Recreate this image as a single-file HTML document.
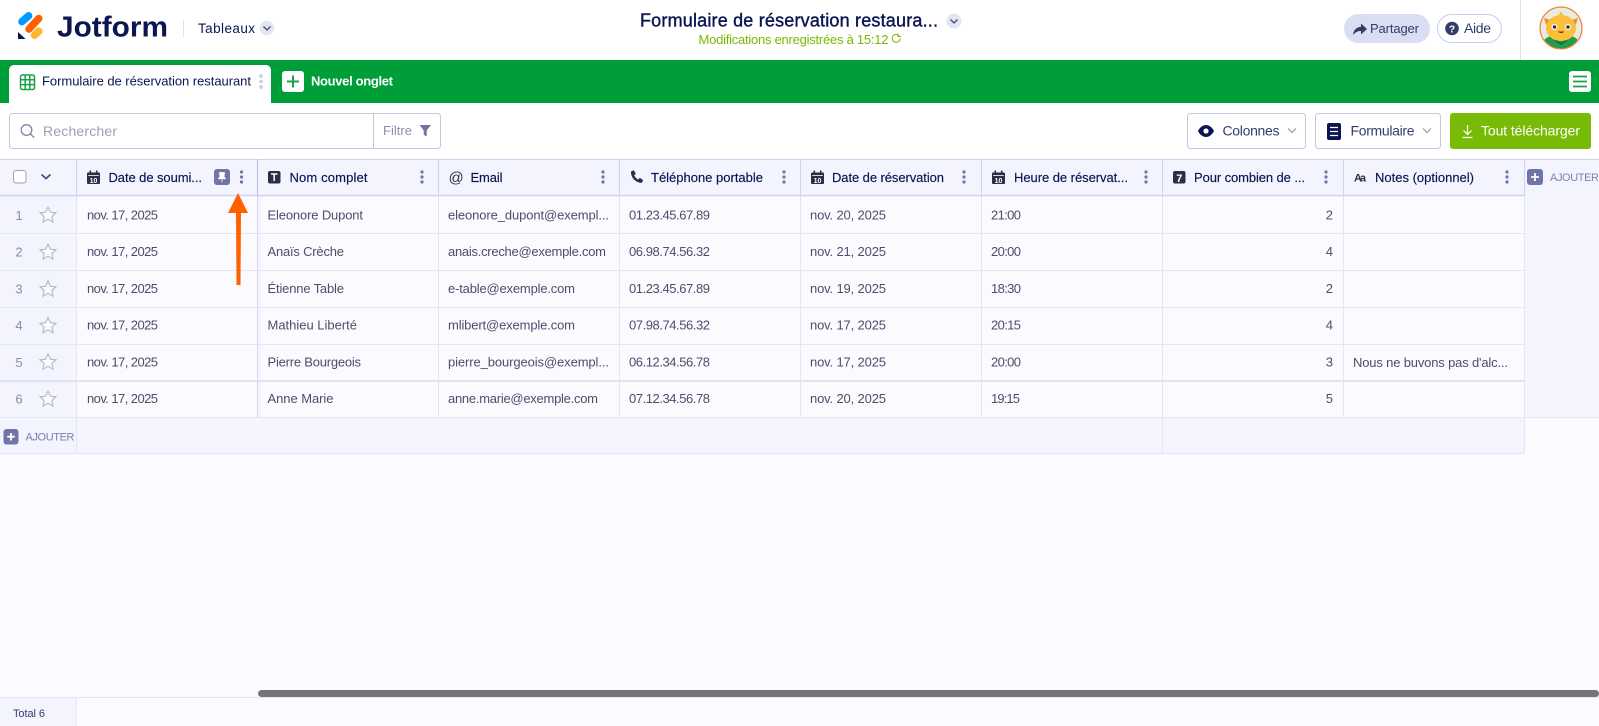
<!DOCTYPE html>
<html lang="fr">
<head>
<meta charset="utf-8">
<title>Formulaire de réservation restaurant - Jotform Tableaux</title>
<style>
html,body{margin:0;padding:0;width:1599px;height:726px;overflow:hidden;background:#fafaff}
svg{display:block}
text{font-family:"Liberation Sans",sans-serif;white-space:pre}
.c{font-size:13px;fill:#4b4f6b}
.h{font-size:13px;fill:#0a1551;stroke:#0a1551;stroke-width:.15}
.l{stroke:#e4e5f5;stroke-width:1}
.hl{stroke:#cdd2f0;stroke-width:1}
.n{font-size:13px;fill:#8a8ea8;text-anchor:middle}
.d{fill:#6f76a7}
.s{fill:#fafaff;stroke:#b4b7c8;stroke-width:1.1}
.i{fill:#2b2f48}
</style>
</head>
<body>
<svg width="1599" height="726" viewBox="0 0 1599 726" xmlns="http://www.w3.org/2000/svg">
<defs>
<g id="cal"><path class="i" d="M1 2.500h11a1 1 0 0 1 1 1V13a1 1 0 0 1-1 1H1a1 1 0 0 1-1-1V3.500a1 1 0 0 1 1-1z"/><rect class="i" x="2.500" y="0.500" width="1.600" height="3.500"/><rect class="i" x="8.900" y="0.500" width="1.600" height="3.500"/><rect x="1.200" y="5" width="10.600" height="0.800" fill="#fff"/><text x="6.500" y="12.800" text-anchor="middle" font-size="7" font-weight="700" fill="#fff">10</text></g>
<g id="dots"><circle cx="0" cy="-5" r="1.600" class="d"/><circle cx="0" cy="0" r="1.600" class="d"/><circle cx="0" cy="5" r="1.600" class="d"/></g>
<path id="star" class="s" d="M0-8 2.300-2.800 8-2.200 3.800 1.600 5 7.200 0 4.300-5 7.200-3.800 1.600-8-2.200-2.300-2.800Z"/>
</defs>

<rect width="1599" height="60" fill="#fff"/>
<rect y="103" width="1599" height="56" fill="#fff"/>

<!-- logo -->
<g stroke-linecap="round" stroke-width="7.500" fill="none">
<path d="M22 21.600 28.600 15.800" stroke="#0099ff"/>
<path d="M29 29 38.700 18.500" stroke="#ff6100"/>
<path d="M34.500 35.200 38.700 31.300" stroke="#ffb629"/>
</g>
<path d="M18 32V38.300a.7.7 0 0 0 .7.7H25.600Z" fill="#0a1551"/>
<text x="57" y="36.500" font-size="29" font-weight="700" fill="#0a1551" textLength="111" lengthAdjust="spacingAndGlyphs">Jotform</text>
<rect x="183" y="20" width="1" height="17" fill="#dfe1ec"/>
<text x="198" y="33" font-size="13.500" fill="#0a1551" textLength="57">Tableaux</text>
<circle cx="267" cy="28" r="7.300" fill="#e3e5f5"/>
<path d="M263.500 26.500 267 30 270.500 26.500" fill="none" stroke="#45496e" stroke-width="1.300"/>

<!-- title -->
<text x="640" y="26.500" font-size="18" fill="#0a1551" stroke="#0a1551" stroke-width=".4" textLength="298">Formulaire de réservation restaura...</text>
<circle cx="954" cy="21" r="7.500" fill="#e3e5f5"/>
<path d="M950.500 19.500 954 23 957.500 19.500" fill="none" stroke="#45496e" stroke-width="1.300"/>
<text x="698.500" y="44" font-size="13" fill="#7ab800" textLength="190">Modifications enregistrées à 15:12</text>
<path d="M899 35.500a4 4 0 1 0 1.200 2.800" fill="none" stroke="#7ab800" stroke-width="1"/>
<path d="M898 33.500v3h3" fill="none" stroke="#7ab800" stroke-width="1"/>

<!-- top right -->
<rect x="1344" y="14" width="86" height="29" rx="14.500" fill="#dadef3"/>
<path d="M1353 35c.5-5 3.500-8 8-8.300V23.500l6 5.500-6 5.500V31c-3.500 0-5.500 1.300-8 4z" fill="#343c6a"/>
<text x="1370" y="33" font-size="13" fill="#343c6a" textLength="49">Partager</text>
<rect x="1437.500" y="14.500" width="64" height="28" rx="14" fill="#fff" stroke="#c8ceed"/>
<circle cx="1452" cy="28.500" r="6.800" fill="#343c6a"/>
<text x="1452" y="32.500" font-size="10.500" font-weight="700" fill="#fff" text-anchor="middle">?</text>
<text x="1464" y="33" font-size="14" fill="#343c6a" textLength="27">Aide</text>
<rect x="1520" y="0" width="1" height="60" fill="#dfe1e8"/>

<!-- avatar -->
<clipPath id="av"><circle cx="1561" cy="28" r="21"/></clipPath>
<circle cx="1561" cy="28" r="21" fill="#e8ebdf"/>
<g clip-path="url(#av)">
<path d="M1542 45c2-8 8-10 19-10s17 2 19 10v5h-38z" fill="#1f9d4d"/>
<path d="M1555 40l6 4 6-4" fill="none" stroke="#0f6a30" stroke-width="1.500"/>
<path d="M1544 18l9 3-5 9zM1578 18l-9 3 5 9z" fill="#f08a2c"/>
<path d="M1561 11l4 7h-8z" fill="#fbbf3a"/>
<ellipse cx="1561" cy="28" rx="15" ry="13" fill="#fbbf3a"/>
<circle cx="1554.500" cy="27" r="3" fill="#fff"/><circle cx="1554.500" cy="27" r="1.800" fill="#27304f"/>
<circle cx="1568" cy="27" r="3" fill="#fff"/><circle cx="1568" cy="27" r="1.800" fill="#27304f"/>
<path d="M1558.500 31.500q2.700 2.200 5 0" fill="#a33" stroke="#7b2c1f" stroke-width="1"/>
</g>
<circle cx="1561" cy="28" r="21" fill="none" stroke="#f3843a" stroke-width="1.300"/>

<!-- green bar -->
<rect y="60" width="1599" height="43" fill="#009e38"/>
<path d="M9 103V70a5 5 0 0 1 5-5H266a5 5 0 0 1 5 5V103Z" fill="#fff"/>
<rect x="20.500" y="75" width="14" height="14.500" rx="2" fill="#fff" stroke="#1aa14a" stroke-width="1.500"/>
<path d="M25.200 75v14.500M29.800 75v14.500M20.500 79.800h14M20.500 84.600h14" stroke="#1aa14a" stroke-width="1.500"/>
<text x="42" y="85.500" font-size="13" fill="#0a1551" textLength="209">Formulaire de réservation restaurant</text>
<circle cx="261" cy="76" r="2" fill="#cdd2ea"/><circle cx="261" cy="81.500" r="2" fill="#cdd2ea"/><circle cx="261" cy="87" r="2" fill="#cdd2ea"/>
<rect x="282" y="71" width="22" height="21" rx="3" fill="#fff"/>
<path d="M293 75.500v12M287 81.500h12" stroke="#1aa14a" stroke-width="2"/>
<text x="311" y="85.500" font-size="13" font-weight="700" fill="#fff" textLength="82">Nouvel onglet</text>
<rect x="1569" y="71" width="22" height="21" rx="3" fill="#fff"/>
<path d="M1573 76.500h14M1573 81.500h14M1573 86.500h14" stroke="#1aa14a" stroke-width="1.700"/>

<!-- search -->
<rect x="9.500" y="113.500" width="431" height="35" rx="3" fill="#fff" stroke="#c5c8d8"/>
<rect x="373" y="113.500" width="1" height="35" fill="#c5c8d8"/>
<circle cx="26.500" cy="130" r="5.300" fill="none" stroke="#7f84a8" stroke-width="1.300"/>
<path d="M30.500 134l3.500 3.500" stroke="#7f84a8" stroke-width="1.300"/>
<text x="43" y="136" font-size="14" fill="#9da0b6" textLength="74">Rechercher</text>
<text x="383" y="135" font-size="13" fill="#8d90ad" textLength="29">Filtre</text>
<path d="M419.500 125h11.500l-4.300 5.500v6l-3-1.800v-4.200z" fill="#6f76a7"/>

<!-- buttons -->
<rect x="1187.500" y="113.500" width="118" height="35" rx="3" fill="#fff" stroke="#c5c8d8"/>
<path d="M1198 131c2-4 5-6 8-6s6 2 8 6c-2 4-5 6-8 6s-6-2-8-6z" fill="#0a1551"/>
<circle cx="1206" cy="131" r="2.600" fill="#fff"/>
<text x="1222.500" y="135.500" font-size="14" fill="#343c6a" textLength="57">Colonnes</text>
<path d="M1288 128.500l4 4 4-4" fill="none" stroke="#8d90ad" stroke-width="1.100"/>
<rect x="1315.500" y="113.500" width="125" height="35" rx="3" fill="#fff" stroke="#c5c8d8"/>
<rect x="1327" y="123" width="14" height="17" rx="2" fill="#0a1551"/>
<path d="M1330 127.500h8M1330 131.500h8M1330 135.500h8" stroke="#fff" stroke-width="1.300"/>
<text x="1350.500" y="135.500" font-size="14" fill="#343c6a" textLength="64">Formulaire</text>
<path d="M1423 128.500l4 4 4-4" fill="none" stroke="#8d90ad" stroke-width="1.100"/>
<rect x="1450" y="113" width="141" height="36" rx="3" fill="#78bb07"/>
<path d="M1467.500 125v9M1463.500 130.500l4 4 4-4M1462.500 137.500h10" fill="none" stroke="#fff" stroke-width="1.200"/>
<text x="1481" y="135.500" font-size="14" fill="#fff" textLength="99">Tout télécharger</text>

<!-- table backgrounds -->
<rect y="159" width="1599" height="37" fill="#f3f4fd"/>
<rect y="196" width="76" height="221" fill="#f3f4fd"/>
<rect x="1524" y="196" width="75" height="221" fill="#f3f4fd"/>
<rect y="417" width="1524" height="36" fill="#f3f4fd"/>
<rect x="258" y="196" width="4" height="221" fill="#f1f2fb" opacity=".7"/>

<!-- row lines -->
<path class="l" d="M0 233.500H1524M0 270.500H1524M0 307.500H1524M0 344.500H1524M0 417.500H1599M0 453.500H1524"/>
<path d="M0 381H1524" stroke="#e0e2f2" stroke-width="2"/>
<!-- column lines -->
<path class="l" d="M76.500 196V453M438.500 196V417M619.500 196V417M800.500 196V417M981.500 196V417M1162.500 196V453M1343.500 196V417M1524.500 196V453"/>
<path d="M257.500 196V417" stroke="#d3d6ec" stroke-width="1"/>

<!-- header lines -->
<path class="hl" d="M0 159.500H1599M76.500 159V196M438.500 159V196M619.500 159V196M800.500 159V196M981.500 159V196M1162.500 159V196M1343.500 159V196M1524.500 159V196"/>
<path d="M0 195.500H1524" stroke="#cdd2f0" stroke-width="1.500"/>
<path d="M257.500 159V196" stroke="#b9bfe2" stroke-width="1"/>

<!-- header left -->
<rect x="13.500" y="170.500" width="12.500" height="12.500" rx="2.500" fill="#fff" stroke="#9da0b6"/>
<path d="M41.500 174.500l4.500 4 4.500-4" fill="none" stroke="#45507e" stroke-width="1.800"/>

<!-- header cells -->
<use href="#cal" x="87" y="170"/>
<text class="h" x="108.500" y="182" textLength="93.500">Date de soumi...</text>
<rect x="214" y="169" width="16" height="16" rx="3" fill="#6f76a7"/>
<path d="M219.500 172.500h5l-.5 4.200 1.500 2H218.500l1.500-2zM222 178.700v3.300" fill="#fff" stroke="#fff" stroke-width=".8"/>
<use href="#dots" x="241.500" y="177"/>

<rect x="268" y="171" width="12.500" height="12.500" rx="2" class="i"/>
<path d="M271 174h6.500M274.200 174v7" stroke="#fff" stroke-width="1.500"/>
<text class="h" x="289.500" y="182" textLength="78">Nom complet</text>
<use href="#dots" x="422" y="177"/>

<text x="448.500" y="182.500" font-size="15" fill="#2b2f48" textLength="14">@</text>
<text class="h" x="470.500" y="182" textLength="32">Email</text>
<use href="#dots" x="603" y="177"/>

<path class="i" d="M631 171.500l2.800-1.300 2 3.600-1.600 1.500c.7 1.800 2.200 3.400 4 4.200l1.500-1.600 3.300 2-1 2.900c-5.900.5-11.500-5.300-11-11.300z"/>
<text class="h" x="651" y="182" textLength="112">Téléphone portable</text>
<use href="#dots" x="784" y="177"/>

<use href="#cal" x="811" y="170"/>
<text class="h" x="832" y="182" textLength="112">Date de réservation</text>
<use href="#dots" x="964" y="177"/>

<use href="#cal" x="992" y="170"/>
<text class="h" x="1014" y="182" textLength="114">Heure de réservat...</text>
<use href="#dots" x="1146" y="177"/>

<rect x="1173" y="171" width="12.500" height="12.500" rx="2" class="i"/>
<text x="1179.300" y="181.800" font-size="11" font-weight="700" fill="#fff" text-anchor="middle">7</text>
<text class="h" x="1194" y="182" textLength="111">Pour combien de ...</text>
<use href="#dots" x="1326" y="177"/>

<text x="1354" y="181.500" font-size="11" font-weight="700" fill="#2b2f48" textLength="12">Aa</text>
<text class="h" x="1375" y="182" textLength="99">Notes (optionnel)</text>
<use href="#dots" x="1507" y="177"/>

<rect x="1527" y="169" width="16" height="16" rx="3" fill="#6f76a7"/>
<path d="M1535 173v8M1531 177h8" stroke="#fff" stroke-width="1.800"/>
<text x="1550" y="181" font-size="11" fill="#7c82ad" textLength="49">AJOUTER</text>

<!-- left column -->
<text class="n" x="19" y="220">1</text><use href="#star" x="48" y="215"/>
<text class="n" x="19" y="256.500">2</text><use href="#star" x="48" y="252"/>
<text class="n" x="19" y="293.500">3</text><use href="#star" x="48" y="289"/>
<text class="n" x="19" y="330">4</text><use href="#star" x="48" y="325.500"/>
<text class="n" x="19" y="367">5</text><use href="#star" x="48" y="362"/>
<text class="n" x="19" y="403.500">6</text><use href="#star" x="48" y="399"/>

<!-- row 1 -->
<text class="c" x="87" y="219.500" textLength="71">nov. 17, 2025</text>
<text class="c" x="267.500" y="219.500" textLength="95.500">Eleonore Dupont</text>
<text class="c" x="448" y="219.500" textLength="161">eleonore_dupont@exempl...</text>
<text class="c" x="629" y="219.500" textLength="81">01.23.45.67.89</text>
<text class="c" x="810" y="219.500" textLength="76">nov. 20, 2025</text>
<text class="c" x="991" y="219.500" textLength="30">21:00</text>
<text class="c" x="1333" y="219.500" text-anchor="end">2</text>
<!-- row 2 -->
<text class="c" x="87" y="256" textLength="71">nov. 17, 2025</text>
<text class="c" x="267.500" y="256" textLength="76.500">Anaïs Crèche</text>
<text class="c" x="448" y="256" textLength="158">anais.creche@exemple.com</text>
<text class="c" x="629" y="256" textLength="81">06.98.74.56.32</text>
<text class="c" x="810" y="256" textLength="76">nov. 21, 2025</text>
<text class="c" x="991" y="256" textLength="30">20:00</text>
<text class="c" x="1333" y="256" text-anchor="end">4</text>
<!-- row 3 -->
<text class="c" x="87" y="293" textLength="71">nov. 17, 2025</text>
<text class="c" x="267.500" y="293" textLength="76.500">Étienne Table</text>
<text class="c" x="448" y="293" textLength="127">e-table@exemple.com</text>
<text class="c" x="629" y="293" textLength="81">01.23.45.67.89</text>
<text class="c" x="810" y="293" textLength="76">nov. 19, 2025</text>
<text class="c" x="991" y="293" textLength="30">18:30</text>
<text class="c" x="1333" y="293" text-anchor="end">2</text>
<!-- row 4 -->
<text class="c" x="87" y="329.500" textLength="71">nov. 17, 2025</text>
<text class="c" x="267.500" y="329.500" textLength="89.500">Mathieu Liberté</text>
<text class="c" x="448" y="329.500" textLength="127">mlibert@exemple.com</text>
<text class="c" x="629" y="329.500" textLength="81">07.98.74.56.32</text>
<text class="c" x="810" y="329.500" textLength="76">nov. 17, 2025</text>
<text class="c" x="991" y="329.500" textLength="30">20:15</text>
<text class="c" x="1333" y="329.500" text-anchor="end">4</text>
<!-- row 5 -->
<text class="c" x="87" y="366.500" textLength="71">nov. 17, 2025</text>
<text class="c" x="267.500" y="366.500" textLength="93.500">Pierre Bourgeois</text>
<text class="c" x="448" y="366.500" textLength="161">pierre_bourgeois@exempl...</text>
<text class="c" x="629" y="366.500" textLength="81">06.12.34.56.78</text>
<text class="c" x="810" y="366.500" textLength="76">nov. 17, 2025</text>
<text class="c" x="991" y="366.500" textLength="30">20:00</text>
<text class="c" x="1333" y="366.500" text-anchor="end">3</text>
<text class="c" x="1353" y="367" textLength="155">Nous ne buvons pas d'alc...</text>
<!-- row 6 -->
<text class="c" x="87" y="403" textLength="71">nov. 17, 2025</text>
<text class="c" x="267.500" y="403" textLength="66">Anne Marie</text>
<text class="c" x="448" y="403" textLength="150">anne.marie@exemple.com</text>
<text class="c" x="629" y="403" textLength="81">07.12.34.56.78</text>
<text class="c" x="810" y="403" textLength="76">nov. 20, 2025</text>
<text class="c" x="991" y="403" textLength="29">19:15</text>
<text class="c" x="1333" y="403" text-anchor="end">5</text>

<!-- add row -->
<rect x="3.500" y="429" width="15" height="15.500" rx="3" fill="#6f76a7"/>
<path d="M11 433v7.500M7.200 436.700h7.600" stroke="#fff" stroke-width="1.800"/>
<text x="25.500" y="440.500" font-size="11" fill="#7c82ad" textLength="49">AJOUTER</text>

<!-- footer -->
<path d="M0 697.500H1599" stroke="#e6e7f6" stroke-width="1"/>
<rect y="698" width="76" height="28" fill="#f3f4fd"/>
<path d="M76.500 698V726" stroke="#e6e7f6"/>
<text x="13" y="717" font-size="11" fill="#343c6a" textLength="32">Total 6</text>
<rect x="258" y="690" width="1341" height="7" rx="3.500" fill="#757575"/>

<!-- arrow -->
<path d="M238 193 248 213H241L240.500 285H236.500L236 213H228Z" fill="#ff6100"/>
</svg>
</body>
</html>
